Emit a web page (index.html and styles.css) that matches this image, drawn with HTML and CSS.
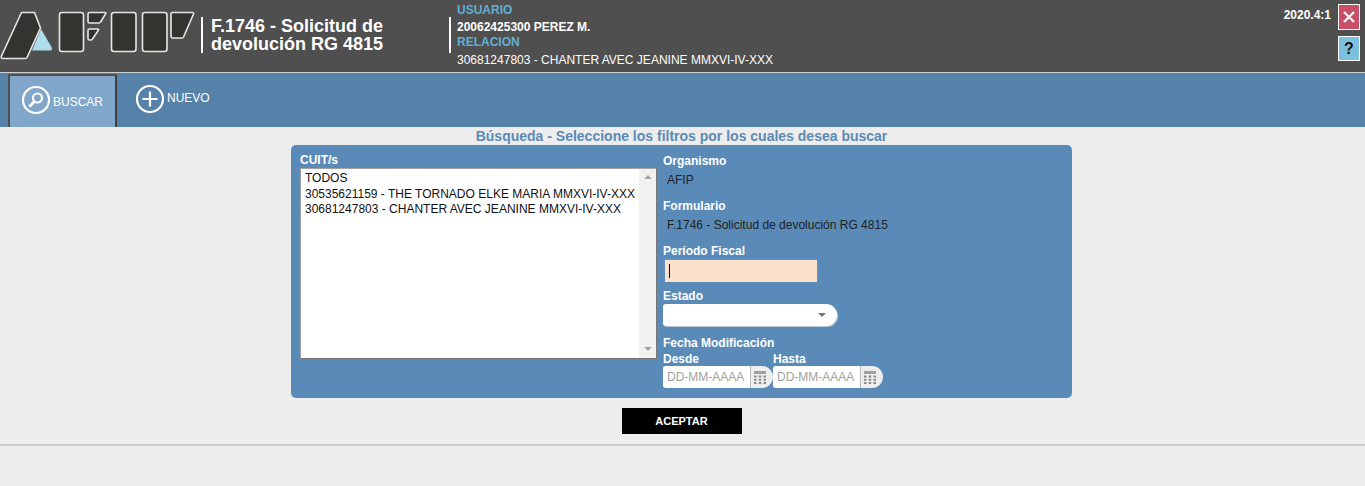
FILE: index.html
```html
<!DOCTYPE html>
<html lang="es">
<head>
<meta charset="utf-8">
<title>F.1746 - Solicitud de devolución RG 4815</title>
<link rel="stylesheet" href="styles.css">
</head>
<body>
<header class="topbar">
  <svg class="logo" width="198" height="72" viewBox="0 0 198 72" aria-label="AFIP">
    <g class="logo-shape">
      <path d="M22 12.5H34.5L40.5 28L27 57.5Q26.5 58.5 25 58.5H3Q0.5 58.5 1.5 56L21 13.5Q21.5 12.5 22 12.5Z"/>
      <rect x="59.5" y="12.5" width="24" height="39" rx="2.5"/>
      <path d="M89.5 12.5H105Q106.5 12.5 105.5 14L100.5 22Q100 23 99 23H89.5Q88 23 88 21.5V14Q88 12.5 89.5 12.5Z"/>
      <path d="M89.5 29H98Q99 29 98.5 30L92.5 39Q92 40 91 40H89.5Q88 40 88 38.5V30.5Q88 29 89.5 29Z"/>
      <rect x="111.5" y="12.5" width="24.5" height="39" rx="2.5"/>
      <rect x="142.5" y="12.5" width="24.5" height="39" rx="2.5"/>
      <path d="M172.5 12.5H192.5Q194 12.5 193.5 14L183.5 37Q183 38 182 38H173Q171 38 171 36V14Q171 12.5 172.5 12.5Z"/>
    </g>
    <path class="logo-tri" d="M41 29L51.5 47Q53 50.5 50 50.5H32Z"/>
  </svg>
  <div class="app-title">F.1746 - Solicitud de<br>devolución RG 4815</div>
  <div class="user-info">
    <div class="user-label">USUARIO</div>
    <div class="user-name">20062425300 PEREZ M.</div>
    <div class="user-label user-label-rel">RELACION</div>
    <div class="user-rel">30681247803 - CHANTER AVEC JEANINE MMXVI-IV-XXX</div>
  </div>
  <div class="version">2020.4:1</div>
  <div class="top-actions">
    <a class="top-btn top-close" href="#" aria-label="Cerrar">
      <svg width="14" height="14" viewBox="0 0 14 14"><path d="M2 2L12 12M12 2L2 12"/></svg>
    </a>
    <a class="top-btn top-help" href="#">?</a>
  </div>
</header>

<nav class="toolbar">
  <a class="tool tool-active" href="#">
    <svg width="30" height="30" viewBox="0 0 30 30">
      <circle class="ico" cx="15" cy="15" r="13"/>
      <circle class="ico" cx="16.5" cy="13" r="4.5"/>
      <path class="ico ico-thick" d="M13.3 16.6L8.5 21.5"/>
    </svg>
    <span class="tool-text">BUSCAR</span>
  </a>
  <a class="tool tool-new" href="#">
    <svg width="30" height="30" viewBox="0 0 30 30">
      <circle class="ico" cx="15" cy="15" r="13"/>
      <path class="ico" d="M15 7.5V22.5M7.5 15H22.5"/>
    </svg>
    <span class="tool-text">NUEVO</span>
  </a>
</nav>

<main class="main">
  <h1 class="search-title">Búsqueda - Seleccione los filtros por los cuales desea buscar</h1>
  <section class="panel">
    <div class="col-left">
      <div class="label">CUIT/s</div>
      <div class="listbox">
        <div class="options">
          <div>TODOS</div>
          <div>30535621159 - THE TORNADO ELKE MARIA MMXVI-IV-XXX</div>
          <div>30681247803 - CHANTER AVEC JEANINE MMXVI-IV-XXX</div>
        </div>
        <div class="scrollbar"><span class="arrow-up"></span><span class="arrow-down"></span></div>
      </div>
    </div>
    <div class="col-right">
      <div class="label">Organismo</div>
      <div class="value">AFIP</div>
      <div class="label">Formulario</div>
      <div class="value">F.1746 - Solicitud de devolución RG 4815</div>
      <div class="label">Período Fiscal</div>
      <div class="period"><span class="caret"></span></div>
      <div class="label label-estado">Estado</div>
      <div class="combo"><span class="combo-arrow"></span></div>
      <div class="label label-fecha">Fecha Modificación</div>
      <div class="dates">
        <div class="date-field">
          <div class="label">Desde</div>
          <div class="date-box">
            <span class="date-input">DD-MM-AAAA</span>
            <span class="date-btn">
              <svg width="12" height="13" viewBox="0 0 12 13"><path class="cal-top" d="M0 0H12V3H0Z"/><path class="cal-grid" d="M0 4.5h2.5v2H0zM4.7 4.5h2.5v2H4.7zM9.5 4.5H12v2H9.5zM0 7.7h2.5v2H0zM4.7 7.7h2.5v2H4.7zM9.5 7.7H12v2H9.5zM0 11h2.5v2H0zM4.7 11h2.5v2H4.7zM9.5 11H12v2H9.5z"/></svg>
            </span>
          </div>
        </div>
        <div class="date-field">
          <div class="label">Hasta</div>
          <div class="date-box">
            <span class="date-input">DD-MM-AAAA</span>
            <span class="date-btn">
              <svg width="12" height="13" viewBox="0 0 12 13"><path class="cal-top" d="M0 0H12V3H0Z"/><path class="cal-grid" d="M0 4.5h2.5v2H0zM4.7 4.5h2.5v2H4.7zM9.5 4.5H12v2H9.5zM0 7.7h2.5v2H0zM4.7 7.7h2.5v2H4.7zM9.5 7.7H12v2H9.5zM0 11h2.5v2H0zM4.7 11h2.5v2H4.7zM9.5 11H12v2H9.5z"/></svg>
            </span>
          </div>
        </div>
      </div>
    </div>
  </section>
  <div class="actions"><button class="accept" type="button">ACEPTAR</button></div>
</main>
<hr class="rule">
</body>
</html>
```
FILE: styles.css
```css
* { box-sizing: border-box; }
html, body { margin: 0; padding: 0; }
body {
  background: #ededed;
  font-family: "Liberation Sans", Arial, sans-serif;
  font-size: 12px;
  color: #222;
  height: 486px;
  overflow: hidden;
}

/* header */
.topbar {
  display: flex;
  height: 73px;
  background: #4f4f4f;
  border-bottom: 1px solid #cfcfcf;
}
.logo { flex: none; margin-right: 3px; }
.logo-shape path, .logo-shape rect {
  fill: #33332f;
  stroke: #e6e6e6;
  stroke-width: 1.6;
}
.logo-tri { fill: #aedcec; }
.app-title {
  width: 248px;
  height: 36px;
  margin-top: 17px;
  padding-left: 8px;
  border-left: 2px solid #fff;
  color: #fff;
  font-size: 18px;
  font-weight: bold;
  line-height: 18px;
}
.user-info {
  position: relative;
  padding-left: 8px;
  padding-top: 2px;
  color: #fff;
  font-size: 12px;
  line-height: 16px;
}
.user-info::before {
  content: "";
  position: absolute;
  left: 0;
  top: 17px;
  width: 2px;
  height: 36px;
  background: #fff;
}
.user-label { color: #62afd3; font-weight: bold; }
.user-name { font-weight: bold; margin-top: 1px; }
.user-label-rel { margin-top: -1px; }
.user-rel { margin-top: 2px; }
.version {
  margin-left: auto;
  margin-top: 8px;
  color: #fff;
  font-weight: bold;
  font-size: 12px;
  line-height: 15px;
}
.top-actions {
  display: flex;
  flex-direction: column;
  gap: 6px;
  margin: 4px 5px 0 7px;
}
.top-btn {
  display: flex;
  align-items: center;
  justify-content: center;
  width: 22px;
  border: 1px solid #fff;
  text-decoration: none;
}
.top-close { height: 26px; background: #c94f68; }
.top-close path { stroke: #f4f4f4; stroke-width: 2.4; fill: none; }
.top-help {
  height: 25px;
  background: #7cc0e0;
  color: #111;
  font-size: 16px;
  font-weight: bold;
}

/* toolbar */
.toolbar {
  display: flex;
  height: 54px;
  background: #5681a9;
  padding-left: 8px;
}
.tool {
  display: flex;
  color: #fff;
  text-decoration: none;
}
.tool-active {
  width: 109px;
  margin-top: 1px;
  padding: 9px 0 0 11px;
  background: #80a7c9;
  border-style: solid;
  border-color: #4f4f4f #404040 #4f4f4f #4f4f4f;
  border-width: 2px 2px 0 2px;
}
.tool-new { padding: 11px 0 0 18px; }
.tool-text { margin-top: 10px; line-height: 14px; }
.tool-new .tool-text { margin-top: 7px; margin-left: 2px; }
.tool-active .tool-text { margin-left: 2px; }
.tool svg { flex: none; }
.ico { fill: none; stroke: #fff; stroke-width: 2.2; }
.ico-thick { stroke-width: 2.8; }

/* main */
.main { padding-right: 2px; }
.search-title {
  margin: 0;
  height: 18px;
  text-align: center;
  font-size: 14px;
  line-height: 18px;
  font-weight: bold;
  color: #5b8ab6;
}
.panel {
  display: flex;
  width: 781px;
  height: 253px;
  margin: 0 auto;
  padding: 8px 9px 0;
  background: #5a8bb8;
  border-radius: 5px;
}
.label {
  color: #fff;
  font-size: 12px;
  font-weight: bold;
  line-height: 14px;
}
.col-left { width: 354px; flex: none; margin-right: 9px; }
.listbox {
  display: flex;
  width: 357px;
  height: 191px;
  margin-top: 1px;
  background: #fff;
  border: 1px solid;
  border-color: #a0a0a0 #767676 #767676 #a0a0a0;
}
.options {
  flex: 1;
  padding: 2px 4px;
  font-size: 12px;
  line-height: 15.5px;
  color: #111;
  white-space: nowrap;
}
.scrollbar {
  display: flex;
  flex-direction: column;
  justify-content: space-between;
  align-items: center;
  width: 17px;
  padding: 6px 0 7px;
  background: #f1f1f1;
}
.arrow-up, .arrow-down {
  width: 0;
  height: 0;
  border-left: 4px solid transparent;
  border-right: 4px solid transparent;
}
.arrow-up { border-bottom: 4px solid #a3a3a3; }
.arrow-down { border-top: 4px solid #a3a3a3; }

.col-right { flex: 1; min-width: 0; }
.col-right .label { height: 14px; line-height: 16px; }
.value {
  height: 31px;
  padding: 6px 0 0 4px;
  font-size: 12px;
  line-height: 15px;
  color: #222;
}
.period {
  display: flex;
  align-items: center;
  width: 156px;
  height: 24px;
  margin-top: 1px;
  padding-left: 4px;
  background: #fae1cc;
  border: solid #5b8fc6;
  border-width: 2px 2px 0 2px;
}
.caret { width: 1px; height: 14px; background: #111; }
.col-right .label-estado { margin-top: 6px; }
.combo {
  display: flex;
  align-items: center;
  justify-content: flex-end;
  width: 174px;
  height: 22px;
  margin-top: 2px;
  padding-right: 11px;
  background: #fff;
  border-radius: 3px 12px 12px 3px;
  box-shadow: 1px 1px 0 #b9c7d4;
}
.combo-arrow {
  width: 0;
  height: 0;
  border-left: 4px solid transparent;
  border-right: 4px solid transparent;
  border-top: 4px solid #777;
}
.col-right .label-fecha { margin-top: 9px; }
.dates { display: flex; margin-top: 2px; }
.date-field { width: 110px; }
.date-box {
  display: flex;
  height: 22px;
  margin-top: 1px;
  border-radius: 3px 12px 12px 3px;
  overflow: hidden;
}
.date-input {
  width: 87px;
  padding-left: 4px;
  background: #fff;
  color: #a0a0a0;
  font-size: 12px;
  line-height: 22px;
  white-space: nowrap;
}
.date-btn {
  display: flex;
  align-items: center;
  justify-content: center;
  width: 23px;
  padding-right: 5px;
  background: #eeeeee;
  border-left: 1px solid #bcbcbc;
}
.cal-top { fill: #a0a0a0; }
.cal-grid { fill: #8a8a8a; }

.actions { display: flex; justify-content: center; margin-top: 10px; }
.accept {
  width: 120px;
  height: 26px;
  padding: 0;
  border: 0;
  background: #000;
  color: #fff;
  font-family: "Liberation Sans", Arial, sans-serif;
  font-size: 11px;
  font-weight: bold;
}
.rule {
  margin: 10px 0 0;
  height: 2px;
  border: 0;
  background: #cdcdcd;
}
```
